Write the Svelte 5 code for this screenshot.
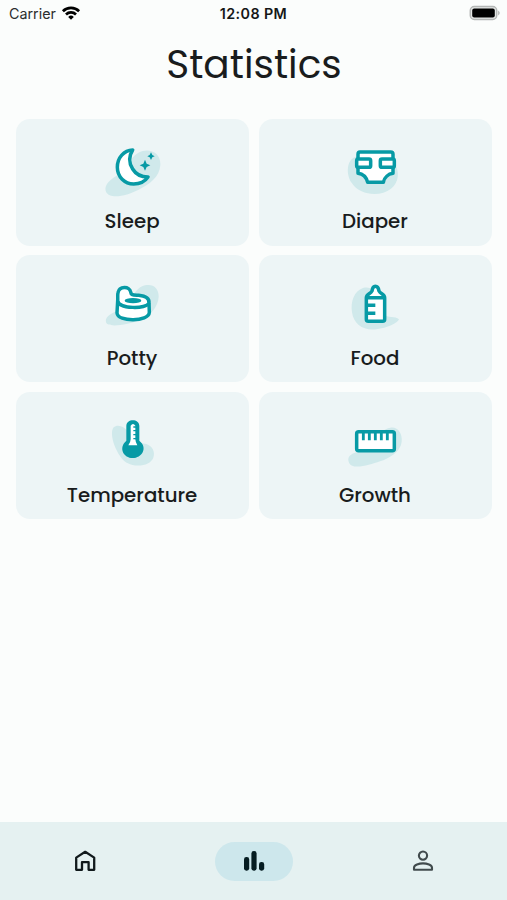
<script lang="ts">
  interface Category {
    id: string;
    label: string;
  }

  const categories: Category[] = [
    { id: 'sleep', label: 'Sleep' },
    { id: 'diaper', label: 'Diaper' },
    { id: 'potty', label: 'Potty' },
    { id: 'food', label: 'Food' },
    { id: 'temperature', label: 'Temperature' },
    { id: 'growth', label: 'Growth' }
  ];

  let activeTab = $state('stats');
</script>

<div class="screen">
  <header class="status-bar">
    <div class="carrier">
      <span>Carrier</span>
      <svg width="20" height="16" viewBox="0 0 20 16" fill="none" stroke="#000" stroke-width="2.7">
        <path d="M1.9 6.2a11.5 11.5 0 0 1 16.2 0" />
        <path d="M5 9.5a7.1 7.1 0 0 1 10 0" />
        <path d="M10 14.7L7.2 11.9a4 4 0 0 1 5.6 0z" fill="#000" stroke="none" />
      </svg>
    </div>
    <span class="time">12:08 PM</span>
    <svg class="battery" width="32" height="16" viewBox="0 0 32 16">
      <rect x="1.3" y="1.6" width="26.4" height="12.8" rx="4" fill="#e6e8e7" stroke="#b4b7b6" stroke-width="1.5" />
      <rect x="3.2" y="3.6" width="22.6" height="8.8" rx="2" fill="#000" />
      <path d="M29.2 5.5q3 2.4 0 4.9z" fill="#adb0af" />
    </svg>
  </header>

  <h1>Statistics</h1>

  <main class="grid">
    {#each categories as { id, label }, i}
      <button class="card">
        <svg class="card-icon" width="90" height="56" viewBox="{i % 2 ? 0 : -6} 24 270 168">
          {#if id === 'sleep'}
            <path class="blob" d="M48 170C40 151 61 132 85 119C111 105 121 57 158 48C187 41 213 58 211 90C209 126 178 148 146 164C109 183 60 194 48 170Z" />
            <path class="line" d="M128 45C102 46 82 68 82 97C82 126 104 147 131 147C150 147 165 139 174 126C153 126 137 117 128 102C116 83 117 62 128 45Z" />
            <path class="solid" d="M165 74L170 86L181 91L170 96L165 107L160 96L149 91L160 86ZM183 52L187 60L194 64L187 67L183 75L179 67L172 64L179 60Z" />
          {:else if id === 'diaper'}
            <path class="blob" d="M77 65C49 74 47 119 66 145C89 181 151 187 183 161C207 143 210 109 193 84C174 55 112 54 77 65Z" />
            <path class="line" d="M90 51H182Q189 51 189 58V115C175 117 163 127 160 142H113C109 127 99 117 84 115V58Q84 51 90 51Z" />
            <rect class="line" x="80" y="72" width="42" height="25" rx="5" />
            <rect class="line" x="151" y="72" width="42" height="25" rx="5" />
          {:else if id === 'potty'}
            <path class="blob" d="M48 151C43 132 69 121 98 111C126 100 126 49 165 40C189 34 207 49 206 74C205 104 180 132 151 144C116 157 54 169 48 151Z" />
            <path class="line" d="M83 87C84 79 82 69 84 62C88 42 119 42 122 60C123 70 130 69 146 70C168 72 178 80 177 93L178 121C176 150 83 151 81 123Z" />
            <path class="line open" d="M83 87C86 111 170 112 177 93" />
            <ellipse class="solid" cx="129" cy="86" rx="25" ry="8" />
          {:else if id === 'food'}
            <path class="blob" d="M99 48C73 57 61 88 66 121C71 158 101 177 139 172C171 168 203 153 207 142C196 131 175 142 158 124C134 101 145 36 99 48Z" />
            <path class="line" d="M109 77H164V142Q164 148 158 148H115Q109 148 109 142ZM109 77C109 66 121 66 126 57C127 50 129 43 136 43C144 43 146 50 147 57C152 66 164 66 164 77Z" />
            <path class="line open" d="M111 100H136M111 124H136" />
          {:else if id === 'temperature'}
            <path class="blob" d="M71 55C84 42 113 56 119 80C126 104 145 98 169 105C188 111 196 129 190 146C181 170 140 177 110 161C82 146 54 74 71 55Z" />
            <path class="solid" d="M109 51C109 28 148 28 148 51V95C175 117 155 147 128 147C101 147 84 117 109 95Z" />
            <path class="tube" d="M122 50Q129 40 136 50V91Q136 98 142 109H115Q122 99 122 91Z" />
            <path class="ticks" d="M130 54H138M130 65H138M130 77H138M130 89H138" />
          {:else}
            <path class="blob" d="M56 158C48 132 90 127 115 121C150 112 143 61 181 56C204 52 218 75 215 98C212 129 177 148 150 157C116 169 63 185 56 158Z" />
            <rect class="line" x="80" y="68" width="113" height="57" rx="6" />
            <path class="line thin" d="M100 69V94M118 69V94M136 69V94M154 69V94M172 69V94" />
          {/if}
        </svg>
        <span class="card-label">{label}</span>
      </button>
    {/each}
  </main>

  <nav>
    <button class="tab" aria-label="Home" onclick={() => (activeTab = 'home')}>
      <span class="pill" class:active={activeTab === 'home'}>
        <svg width="24" height="24" viewBox="0 0 24 24" fill="none" stroke="#111a1c" stroke-width="2.3" stroke-linejoin="round">
          <path d="M3.2 8.6L12.2 2.8L21.2 8.6V20.8H15.6V13.2H9V20.8H3.2Z" />
        </svg>
      </span>
    </button>
    <button class="tab" aria-label="Statistics" onclick={() => (activeTab = 'stats')}>
      <span class="pill" class:active={activeTab === 'stats'}>
        <svg width="24" height="24" viewBox="0 0 24 24" fill="#061d22">
          <rect x="2" y="8" width="5.2" height="13.7" rx="2.4" />
          <rect x="9.4" y="2" width="5.2" height="19.7" rx="2.4" />
          <rect x="17" y="13" width="5.2" height="8.7" rx="2.4" />
        </svg>
      </span>
    </button>
    <button class="tab" aria-label="Profile" onclick={() => (activeTab = 'profile')}>
      <span class="pill" class:active={activeTab === 'profile'}>
        <svg width="24" height="24" viewBox="0 0 24 24" fill="none" stroke="#414b4d" stroke-width="2.1">
          <circle cx="12" cy="6.6" r="4.1" />
          <path d="M3 20.8V18.7C3 16 8 14.4 12 14.4S21 16 21 18.7V20.8Z" stroke-linejoin="round" />
        </svg>
      </span>
    </button>
  </nav>
</div>

<style>
  :global(body) {
    margin: 0;
  }

  .screen {
    display: flex;
    flex-direction: column;
    height: 900px;
    background: #fbfdfc;
    color: #191c1d;
    font-family: Poppins, Inter, sans-serif;
  }

  .status-bar {
    display: grid;
    grid-template-columns: 1fr auto 1fr;
    align-items: center;
    height: 27px;
    padding: 0 6px 0 9px;
    font-family: Inter, sans-serif;
    font-size: 14.3px;
    color: #2b2d2d;
  }

  .carrier {
    display: flex;
    align-items: center;
    gap: 5px;
  }

  .carrier svg {
    margin-top: -1px;
  }

  .time {
    margin-right: 3px;
    font-weight: 600;
    color: #151717;
    letter-spacing: 0.4px;
  }

  .battery {
    justify-self: end;
    margin-top: -1px;
  }

  h1 {
    margin: 0;
    height: 91.5px;
    line-height: 75px;
    text-align: center;
    text-indent: 1px;
    font-size: 39px;
    font-weight: 400;
  }

  .grid {
    display: grid;
    grid-template-columns: 1fr 1fr;
    grid-auto-rows: 127px;
    gap: 9.8px;
    padding: 0 15px 0 16px;
    flex: 1;
  }

  button {
    border: 0;
    padding: 0;
    background: none;
    font: inherit;
    color: inherit;
  }

  .card {
    display: flex;
    flex-direction: column;
    align-items: center;
    justify-content: flex-start;
    padding-top: 24.5px;
    border-radius: 14px;
    background: #edf5f6;
  }

  .card-icon {
    display: block;
    flex: none;
  }

  .card-label {
    margin: 7.3px 1px 0 0;
    font-size: 19.8px;
    line-height: 30px;
    font-weight: 500;
    white-space: nowrap;
  }

  .blob {
    fill: #d0e9eb;
  }

  .line {
    fill: #fff;
    stroke: #079aa5;
    stroke-width: 10.5;
    stroke-linejoin: round;
  }

  .open {
    fill: none;
  }

  .thin {
    stroke-width: 8.5;
  }

  .solid {
    fill: #079aa5;
  }

  .tube {
    fill: #fff;
  }

  .ticks {
    stroke: #079aa5;
    stroke-width: 4;
  }

  nav {
    display: grid;
    grid-template-columns: repeat(3, 1fr);
    height: 78px;
    background: #e5f1f1;
  }

  .tab {
    display: flex;
    align-items: center;
    justify-content: center;
  }

  .pill {
    display: flex;
    align-items: center;
    justify-content: center;
    width: 78px;
    height: 39px;
    border-radius: 20px;
  }

  .active {
    background: #cde7ec;
  }
</style>
